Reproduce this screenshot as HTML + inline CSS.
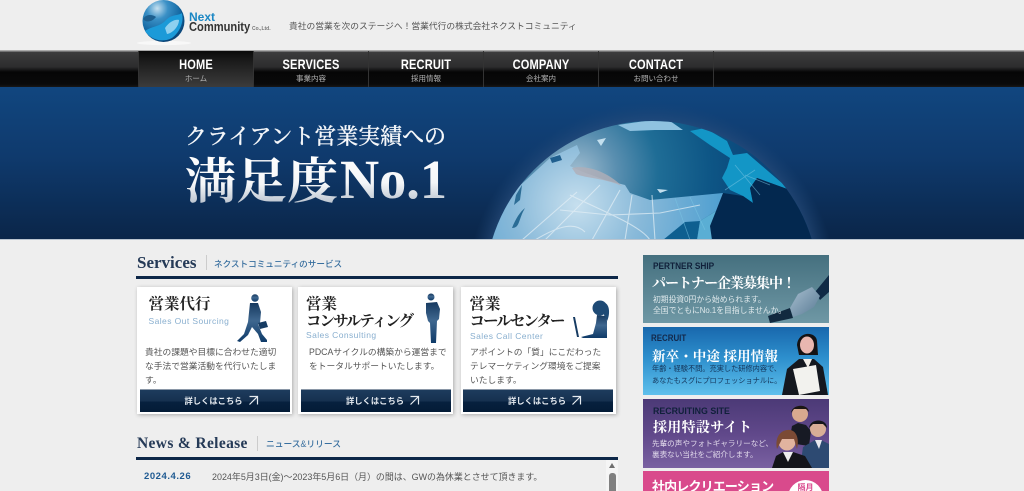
<!DOCTYPE html>
<html lang="ja"><head><meta charset="utf-8"><title>Next Community</title>
<style>
*{box-sizing:border-box;margin:0;padding:0}
html,body{width:1024px;height:491px;overflow:hidden;background:#eee}
body{position:relative;font-family:"Liberation Sans","Noto Sans CJK JP",sans-serif;color:#555;filter:blur(.3px)}
.a{position:absolute;white-space:nowrap}
.nav{position:absolute;left:0;top:50px;width:1024px;height:38px;background:linear-gradient(#aaa 0,#aaa 1px,#3c3c3d 2px,#2c2c2d 17px,#060606 22px,#0a0a0a 34px,#171717 37px)}
.ni{position:absolute;top:1px;width:115px;height:37px;border-left:1px solid #333;text-align:center;color:#fff}
.ni b{display:block;font-size:14px;line-height:14px;margin-top:6px;font-weight:bold;transform:scaleX(.79);letter-spacing:.2px}
.ni span{display:block;font-size:7.5px;line-height:9px;margin-top:3px;color:#b5b5b5}
.sv{font-family:"Liberation Serif","Noto Serif CJK SC",serif;font-weight:bold}
.card{position:absolute;top:287px;width:155px;height:127px;background:#fff;box-shadow:1px 1px 4px rgba(0,0,0,.28)}
.btn{position:absolute;left:3px;top:102px;width:150px;height:23px;background:linear-gradient(#1d3b5d,#16304f 50%,#06203e 55%,#041b36);border:1px solid #8a97a7;border-width:1px 0 0;color:#e6ebf0;font-size:8.3px;font-weight:bold;text-align:center;line-height:23px;padding-left:14px}
.btn svg{margin-left:5px;vertical-align:-2px}
.t{position:absolute;font-family:"Liberation Serif","Noto Serif CJK JP",serif;font-weight:bold;color:#222;font-size:15.5px;line-height:17px;white-space:nowrap}
.t i{font-style:normal;letter-spacing:-1.95px}
.e{position:absolute;color:#89afcf;font-size:8.5px;white-space:nowrap;letter-spacing:.42px}
.p{position:absolute;font-size:8.75px;line-height:14px;color:#555;white-space:nowrap}
.ban{position:absolute;left:643px;width:186px;overflow:hidden;color:#fff}
.ban div,.ban svg{position:absolute}
.h{font-weight:bold;font-size:9px;color:#10203a;white-space:nowrap;transform-origin:0 0}
.m{font-family:"Liberation Serif","Noto Serif CJK JP",serif;font-weight:bold;white-space:nowrap}
.s{white-space:nowrap}
</style></head><body>

<svg class="a" style="left:138px;top:0;overflow:visible" width="60" height="46" viewBox="0 0 60 46">
<defs><radialGradient id="lg" cx=".35" cy=".2" r=".85"><stop offset="0" stop-color="#c5e0f0"/><stop offset=".3" stop-color="#3a90c6"/><stop offset=".7" stop-color="#0f639e"/><stop offset="1" stop-color="#0a3f70"/></radialGradient></defs>
<ellipse cx="26" cy="43" rx="27" ry="2.2" fill="#f8f8f8"/>
<circle cx="25.5" cy="21" r="21" fill="url(#lg)"/>
<path d="M7 31C14 26 22 27 28 20C34 14 40 16 44 13C46 22 42 32 34 38C24 43 13 40 7 31Z" fill="#1c9ad8"/>
<path d="M27 28C31 22 37 19 41 20C41 26 35 33 29 34Z" fill="#8fd0ef"/>
<path d="M5 19C8 14 14 14 18 17C14 22 8 23 5 19Z" fill="#1d5f8f"/>
<path d="M36 3C44 8 48 20 43 31C47 24 47 10 36 3Z" fill="#08375f"/>
</svg>
<div class="a" style="left:189px;top:11px;font-size:12px;font-weight:bold;line-height:12px;color:#1b87c4">Next</div>
<div class="a" style="left:189px;top:21px;font-size:12.5px;font-weight:bold;line-height:13px;color:#333;transform:scaleX(.89);transform-origin:0 0">Community</div>
<div class="a" style="left:252px;top:26px;font-size:5px;line-height:7px;font-weight:bold;color:#777">Co.,Ltd.</div>
<div class="a" style="left:289px;top:20px;font-size:8.75px;line-height:13px;color:#555">貴社の営業を次のステージへ！営業代行の株式会社ネクストコミュニティ</div>

<div class="nav">
<div class="ni" style="left:138px;background:linear-gradient(#0a0a0a,#1b1b1b 10px,#3c3c3c 36px)"><b>HOME</b><span>ホーム</span></div>
<div class="ni" style="left:253px"><b>SERVICES</b><span>事業内容</span></div>
<div class="ni" style="left:368px"><b>RECRUIT</b><span>採用情報</span></div>
<div class="ni" style="left:483px"><b>COMPANY</b><span>会社案内</span></div>
<div class="ni" style="left:598px;width:116px;border-right:1px solid #333"><b>CONTACT</b><span>お問い合わせ</span></div>
</div>

<svg class="a" style="left:0;top:87px" width="1024" height="153" viewBox="0 87 1024 153">
<defs>
<linearGradient id="bg" x1="0" y1="0" x2="0" y2="1"><stop offset="0" stop-color="#11467f"/><stop offset=".45" stop-color="#0f3a6d"/><stop offset="1" stop-color="#0a2548"/></linearGradient>
<radialGradient id="oc" gradientUnits="userSpaceOnUse" cx="577" cy="172" r="180"><stop offset="0" stop-color="#a0bdd0"/><stop offset=".22" stop-color="#5a8fb0"/><stop offset=".45" stop-color="#1f6d96"/><stop offset=".75" stop-color="#0d5585"/><stop offset="1" stop-color="#0b4679"/></radialGradient>
<radialGradient id="ld" gradientUnits="userSpaceOnUse" cx="577" cy="205" r="145"><stop offset="0" stop-color="#c6dfee"/><stop offset=".45" stop-color="#88b9d9"/><stop offset="1" stop-color="#4f9fd0"/></radialGradient>
<radialGradient id="ha" gradientUnits="userSpaceOnUse" cx="652" cy="288" r="185"><stop offset=".88" stop-color="#2c4f7e" stop-opacity=".75"/><stop offset="1" stop-color="#1c4676" stop-opacity="0"/></radialGradient>
<linearGradient id="tx" x1="0" y1="0" x2="0" y2="1"><stop offset="0" stop-color="#fff"/><stop offset=".55" stop-color="#f4f6f8"/><stop offset="1" stop-color="#a9b5c3"/></linearGradient>
<clipPath id="gc"><circle cx="652" cy="288" r="167"/></clipPath>
</defs>
<rect x="0" y="87" width="1024" height="153" fill="url(#bg)"/>
<circle cx="652" cy="288" r="185" fill="url(#ha)"/>
<circle cx="652" cy="288" r="167" fill="url(#oc)"/>
<g clip-path="url(#gc)">
<path d="M618 125L645 121L670 121L683 130L655 130L630 131Z" fill="#8fc2e0"/>
<path d="M690 131L705 128L727 141L733 155L747 153L790 190L757 178L750 188L753 203L743 196L730 190L722 178L727 168L730 158L710 145Z" fill="#1396c6"/>
<path d="M757 178L790 190L820 240L700 240L705 222L723 193L743 196L753 203L750 188Z" fill="#03284f"/>
<path d="M485 240L515 190L550 158L577 145L580 153L570 166L583 172L605 180L625 185L630 193L650 200L723 193L716 211L700 221L697 240Z" fill="url(#ld)"/>
<path d="M663 240L685 222L700 221L697 240Z" fill="#0e5f90"/>
<path d="M697 240L700 221L716 211L710 226L712 240Z" fill="#5aaed4"/>
<path d="M572 168C585 165 605 170 622 186C604 178 585 178 576 174Z" fill="#b0aeb6" opacity=".8"/>
<path d="M597 140L606 138L601 146Z M657 189L668 190L660 193Z" fill="#c3dfee"/>
<path d="M550 158L560 155L562 160L552 163Z" fill="#205f8e"/>
<path d="M516 195L522 185L520 200L514 205Z" fill="#2d6d95"/>
<path d="M512 228C516 218 520 212 525 208C518 220 520 228 512 228Z" fill="#2a6c95"/>
<g stroke="#e4eff6" stroke-width="1.1" fill="none" opacity=".7">
<path d="M522 240L577 192M545 240L600 185M592 240L620 190M625 240L632 195M655 240L652 195"/>
<path d="M560 210L610 215L660 213L700 205"/><path d="M535 240C560 225 575 222 585 232"/>
<path d="M570 195C600 210 640 225 650 240"/>
</g>
<g stroke="#7cc6e3" stroke-width=".8" fill="none" opacity=".55"><path d="M735 165L760 195M745 175L770 185M725 190L755 170M675 198L690 240M690 197L705 230"/></g>
</g>
<rect x="0" y="239" width="1024" height="1" fill="#b9c4cf"/>
<text x="185" y="144" font-family="Liberation Serif,Noto Serif CJK JP,serif" font-size="22" font-weight="500" stroke="#f5f7fa" stroke-width=".25" fill="#f5f7fa" textLength="261" lengthAdjust="spacingAndGlyphs">クライアント営業実績への</text>
<text x="185" y="198" font-family="Liberation Serif,Noto Serif CJK JP,serif" font-size="49" font-weight="bold" fill="url(#tx)" textLength="153" lengthAdjust="spacingAndGlyphs">満足度</text>
<text x="340" y="198" font-family="Liberation Serif,serif" font-size="55" font-weight="bold" fill="url(#tx)" textLength="107" lengthAdjust="spacingAndGlyphs">No.1</text>
</svg>

<div class="a sv" style="left:137px;top:253px;font-size:17px;line-height:20px;color:#253a57">Services</div>
<div class="a" style="left:206px;top:255px;width:1px;height:15px;background:#ccc"></div>
<div class="a" style="left:214px;top:258px;font-size:8.6px;line-height:13px;color:#386f9f;font-weight:500">ネクストコミュニティのサービス</div>
<div class="a" style="left:136px;top:276px;width:482px;height:3px;background:#0d2748"></div>

<div class="card" style="left:136.5px">
<div class="t" style="left:12px;top:9px">営業代行</div>
<div class="e" style="left:12px;top:29px">Sales Out Sourcing</div>
<svg class="a" style="left:99.5px;top:5px" width="50" height="54" viewBox="0 0 50 54"><defs><linearGradient id="p" x1="0" y1="0" x2="0" y2="1"><stop offset="0" stop-color="#16395f"/><stop offset=".45" stop-color="#3f678f"/><stop offset="1" stop-color="#0e3a68"/></linearGradient></defs>
<circle cx="19" cy="6" r="3.8" fill="url(#p)"/>
<path d="M14 11L22 11L25 20L24 31L22 32L26 42L31 48L31 50L25 50L22 42L16 35L12 43L4 50L1 49L8 42L12 30Z" fill="url(#p)"/>
<path d="M22 31L30 29L32 35L24 37Z" fill="#163b62"/></svg>
<div class="p" style="left:8.5px;top:58px">貴社の課題や目標に合わせた適切<br>な手法で営業活動を代行いたしま<br>す。</div>
<div class="btn">詳しくはこちら<svg width="11" height="11" viewBox="0 0 11 11"><path d="M1.5 1.5H9.5V9.5M9.5 1.5L1.5 9.5" fill="none" stroke="#e6ebf0" stroke-width="1.2"/></svg></div>
</div>

<div class="card" style="left:298px">
<div class="t" style="left:8px;top:9px">営業<br><i>コンサルティング</i></div>
<div class="e" style="left:8px;top:43px">Sales Consulting</div>
<svg class="a" style="left:122px;top:4px" width="30" height="54" viewBox="0 0 30 54"><circle cx="11" cy="6" r="3.5" fill="url(#p)"/>
<path d="M6 12L17 11L20 18L19 28L17 30L16 52L11 52L10 32L8 30L6 22Z" fill="url(#p)"/></svg>
<div class="p" style="left:11px;top:58px">PDCAサイクルの構築から運営まで<br>をトータルサポートいたします。</div>
<div class="btn">詳しくはこちら<svg width="11" height="11" viewBox="0 0 11 11"><path d="M1.5 1.5H9.5V9.5M9.5 1.5L1.5 9.5" fill="none" stroke="#e6ebf0" stroke-width="1.2"/></svg></div>
</div>

<div class="card" style="left:461px">
<div class="t" style="left:8.5px;top:9px">営業<br><i>コールセンター</i></div>
<div class="e" style="left:9px;top:44px">Sales Call Center</div>
<svg class="a" style="left:108px;top:12px" width="44" height="44" viewBox="0 0 44 44"><circle cx="31" cy="9" r="7.5" fill="#1e4a75"/><path d="M36 4C41 6 41 16 38 22L35 16Z" fill="#1e4a75"/><path d="M28 16L36 17L38 22L38 39L14 39L12 38L24 35L27 24Z" fill="url(#p)"/><path d="M4 18L6 18L10 38L8 38Z" fill="#163b62"/></svg>
<div class="p" style="left:9px;top:58px">アポイントの「質」にこだわった<br>テレマーケティング環境をご提案<br>いたします。</div>
<div class="btn" style="left:2px">詳しくはこちら<svg width="11" height="11" viewBox="0 0 11 11"><path d="M1.5 1.5H9.5V9.5M9.5 1.5L1.5 9.5" fill="none" stroke="#e6ebf0" stroke-width="1.2"/></svg></div>
</div>

<div class="a sv" style="left:137px;top:434px;font-size:15.5px;line-height:20px;color:#253a57;letter-spacing:.35px">News &amp; Release</div>
<div class="a" style="left:257px;top:436px;width:1px;height:15px;background:#ccc"></div>
<div class="a" style="left:266px;top:438px;font-size:8.75px;line-height:13px;color:#386f9f;font-weight:500">ニュース&amp;リリース</div>
<div class="a" style="left:136px;top:457px;width:482px;height:3px;background:#0d2748"></div>
<div class="a" style="left:144px;top:470px;font-size:9.5px;line-height:14px;font-weight:bold;color:#1f5a92;letter-spacing:.55px">2024.4.26</div>
<div class="a" style="left:212px;top:470px;font-size:8.95px;line-height:14px;color:#555">2024年5月3日(金)～2023年5月6日（月）の間は、GWの為休業とさせて頂きます。</div>
<div class="a" style="left:606px;top:460px;width:12px;height:31px;background:#f5f5f5"></div>
<div class="a" style="left:608.5px;top:463px;width:0;height:0;border-left:3.5px solid transparent;border-right:3.5px solid transparent;border-bottom:5px solid #6e6e6e"></div>
<div class="a" style="left:609px;top:473px;width:7px;height:18px;border-radius:3px 3px 0 0;background:#808080"></div>

<div class="ban" style="top:255px;height:68px;background:linear-gradient(#45707f,#6f98a5)">
<svg style="left:125px;top:15px" width="61" height="53" viewBox="0 0 61 53"><defs><linearGradient id="hs" x1="0" y1="0" x2="1" y2="1"><stop offset="0" stop-color="#a9bfd0"/><stop offset="1" stop-color="#587a94"/></linearGradient></defs>
<path d="M61 5L47 22L52 30L61 22Z" fill="#0f2a45"/><path d="M0 46L22 38L25 48L2 53Z" fill="#11293f"/>
<path d="M22 38L30 24L44 17L52 26L46 37L34 44L25 47Z" fill="url(#hs)"/></svg>
<div class="h" style="left:10px;top:6px;transform:scaleX(.92)">PERTNER SHIP</div>
<div class="m" style="left:9px;top:18px;font-size:14px;letter-spacing:-1px">パートナー企業募集中！</div>
<div class="s" style="left:10px;top:38.5px;font-size:7.8px;line-height:11px;color:#dfe9ec">初期投資0円から始められます。<br>全国でともにNo.1を目指しませんか。</div>
</div>

<div class="ban" style="top:327px;height:68px;background:linear-gradient(#1968ad,#2d8fcd 45%,#5fc0ec)">
<svg style="left:139px;top:4px" width="47" height="64" viewBox="0 0 47 64">
<path d="M15 14C16 0 34 0 35 10L36 24L17 24Z" fill="#141214"/><ellipse cx="25" cy="14" rx="7" ry="8.5" fill="#e8b7b0"/>
<path d="M0 64L5 38L17 28L32 28L41 36L46 64Z" fill="#14181f"/>
<path d="M11 38L34 34L38 60L17 64Z" fill="#f2f2ee"/><path d="M21 28L26 37L30 28Z" fill="#f2eee8"/></svg>
<div class="h" style="left:8px;top:6px;color:#13284a;transform:scaleX(.88)">RECRUIT</div>
<div class="m" style="left:9px;top:18px;font-size:13.5px;letter-spacing:.1px">新卒・中途 採用情報</div>
<div class="s" style="left:9px;top:36px;font-size:7.2px;line-height:12px;color:#14355a">年齢・経験不問。充実した研修内容で、<br>あなたもスグにプロフェッショナルに。</div>
</div>

<div class="ban" style="top:399px;height:69px;background:linear-gradient(#4c3a77,#60488a 50%,#7a61a2)">
<svg style="left:122px;top:2px" width="64" height="67" viewBox="0 0 64 67">
<circle cx="35" cy="13" r="8" fill="#d8a98f"/><path d="M26 12C27 3 43 2 44 11L41 8L29 8Z" fill="#1b1714"/>
<path d="M24 42L27 25L33 22L41 24L46 30L44 45Z" fill="#171a24"/>
<circle cx="53" cy="28" r="8" fill="#d8ae97"/><path d="M44 27C45 17 62 17 62 27L58 23L48 23Z" fill="#15161b"/>
<path d="M35 67L38 46L50 39L56 39L64 43V67Z" fill="#2d4a72"/><path d="M50 39L54 48L57 39Z" fill="#e9e9ef"/>
<circle cx="22" cy="41" r="8.5" fill="#e1b39f"/><path d="M12 48C9 33 19 28 25 29C33 30 34 41 32 48L29 38L17 38Z" fill="#7b4a35"/>
<path d="M7 67L11 55L18 51L28 51L40 55L47 67Z" fill="#14141a"/><path d="M18 51L23 61L28 51Z" fill="#eee"/></svg>
<div class="h" style="left:10px;top:7px;transform:scaleX(.98)">RECRUITING SITE</div>
<div class="m" style="left:10px;top:18px;font-size:14px;letter-spacing:.3px">採用特設サイト</div>
<div class="s" style="left:9px;top:38.5px;font-size:7.6px;line-height:11px;color:#e0d8ea">先輩の声やフォトギャラリーなど、<br>裏表ない当社をご紹介します。</div>
</div>

<div class="ban" style="top:471px;height:20px;background:#d94a8c">
<div class="m" style="left:9px;top:5px;font-size:13px;font-family:'Liberation Sans','Noto Sans CJK JP',sans-serif;letter-spacing:-.85px">社内レクリエーション</div>
<div style="left:145px;top:9px;width:35px;height:35px;border-radius:50%;background:#fff;color:#d94a8c;font-size:8px;font-weight:bold;text-align:center;line-height:10px;padding-top:3px">隔月</div>
</div>
</body></html>
